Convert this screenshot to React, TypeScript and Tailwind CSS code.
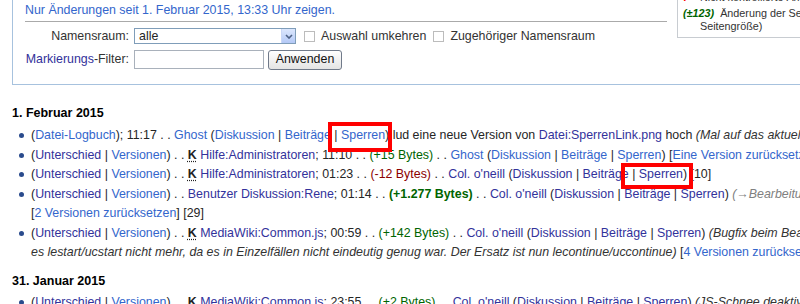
import React from "react";

function A({ v, children }: { v?: boolean; children: React.ReactNode }) {
  return <span className={v ? "text-[#32329b]" : "text-[#3366cc]"}>{children}</span>;
}

function K() {
  return <span className="font-bold text-[#222] underline decoration-dotted underline-offset-2">K</span>;
}

function Pos({ children }: { children: React.ReactNode }) {
  return <span className="text-[#006400]">{children}</span>;
}

function Neg({ children }: { children: React.ReactNode }) {
  return <span className="text-[#8b0000]">{children}</span>;
}

function C({ children }: { children: React.ReactNode }) {
  return <span className="italic text-[#333]">{children}</span>;
}

function Row({ lines }: { lines: React.ReactNode[] }) {
  return (
    <li className="flex">
      <div className="w-[19px] h-[19.5px] shrink-0 flex items-center pl-[7px]">
        <span className="block w-[5px] h-[5px] rounded-full bg-[#2a4b8d]" />
      </div>
      <div>
        {lines.map((l, i) => (
          <div key={i} className="whitespace-nowrap h-[19.5px] leading-[19.5px]">
            {l}
          </div>
        ))}
      </div>
    </li>
  );
}

function Checkbox() {
  return <span className="block w-[11px] h-[11px] border border-[#bcbcbc] bg-white shrink-0" />;
}

export default function App() {
  return (
    <div className="relative w-[800px] h-[304px] overflow-hidden bg-white font-['Liberation_Sans',Arial,sans-serif] text-[12.4px] text-[#252525]">
      {/* Options fieldset */}
      <div className="ml-[12px] w-[900px] border-l border-b border-[#a7c2de] h-[85px] flex">
        <div className="w-[654px] shrink-0 pl-[12px] mr-[10px]">
          <div className="h-[20px] leading-[20px] whitespace-nowrap">
            <A>Nur Änderungen seit 1. Februar 2015, 13:33 Uhr zeigen.</A>
          </div>
          <div className="mt-[1px] border-t border-[#aaaaaa]" />
          <div className="mt-[6px] h-[16px] flex items-center whitespace-nowrap">
            <div className="w-[104px] text-right text-[#333] shrink-0">Namensraum:</div>
            <div className="ml-[5px] w-[162px] h-[16px] border border-[#7f9db9] flex items-stretch bg-white">
              <div className="flex-1 pl-[4px] leading-[14px]">alle</div>
              <div className="w-[14px] bg-linear-to-b from-[#dce7fd] to-[#b4c9f6] flex items-center justify-center border-l border-[#c9d7f7]">
                <svg width="8" height="5" viewBox="0 0 8 5">
                  <path d="M1 1 L4 4 L7 1" fill="none" stroke="#4d6185" strokeWidth="1.6" />
                </svg>
              </div>
            </div>
            <div className="ml-[8px]"><Checkbox /></div>
            <span className="ml-[6px] text-[#333]">Auswahl umkehren</span>
            <div className="ml-[7px]"><Checkbox /></div>
            <span className="ml-[6px] text-[#333]">Zugehöriger Namensraum</span>
          </div>
          <div className="mt-[6px] h-[19px] flex items-center whitespace-nowrap">
            <div className="w-[104px] text-right text-[#333] shrink-0">
              <A v>Markierungs</A>-Filter:
            </div>
            <div className="ml-[5px] w-[130px] h-[19px] border border-[#a9b1bb] bg-white" />
            <div className="ml-[4px] w-[74px] h-[20px] rounded-[3px] border border-[#707a8a] bg-linear-to-b from-white to-[#e4e4e4] flex items-center justify-center text-[#111]">
              Anwenden
            </div>
          </div>
        </div>
        {/* legend */}
        <div className="w-[200px] shrink-0 self-start -mt-[13px] border border-[#c8ccd1] pl-[5px] pt-[3px] pb-[4px] text-[10.8px] leading-[13px] text-[#333] whitespace-nowrap">
          <div className="flex h-[13px]">
            <span className="w-[17px] text-[#ff0000] font-bold">!</span>
            <span>Nicht kontrollierte Änderung</span>
          </div>
          <div className="flex h-[13px] mt-[3px]">
            <span className="text-[#006400] font-bold italic">(±123)</span>
            <span className="ml-[6px]">Änderung der Seitengröße in Bytes</span>
          </div>
          <div className="h-[13px] pl-[17px]">Seitengröße)</div>
        </div>
      </div>

      {/* Changes list */}
      <div className="pl-[12px]">
        <div className="mt-[18px] h-[20px] leading-[20px] font-bold text-[12.5px] text-black">1. Februar 2015</div>
        <ul className="mt-[3px]">
          <Row
            lines={[
              <>(<A>Datei-Logbuch</A>); 11:17 . . <A>Ghost</A> (<A>Diskussion</A> | <A>Beiträge</A> | <A>Sperren</A>) lud eine neue Version von <A v>Datei:SperrenLink.png</A> hoch <C>(Mal auf das aktuelle Format gebracht)</C></>,
            ]}
          />
          <Row
            lines={[
              <>(<A v>Unterschied</A> | <A>Versionen</A>) . . <K /> <A v>Hilfe:Administratoren</A>; 11:10 . . <Pos>(+15 Bytes)</Pos> . . <A>Ghost</A> (<A>Diskussion</A> | <A>Beiträge</A> | <A>Sperren</A>) [<A>Eine Version zurücksetzen</A>]</>,
            ]}
          />
          <Row
            lines={[
              <>(<A v>Unterschied</A> | <A>Versionen</A>) . . <K /> <A v>Hilfe:Administratoren</A>; 01:23 . . <Neg>(-12 Bytes)</Neg> . . <A v>Col. o'neill</A> (<A v>Diskussion</A> | <A v>Beiträge</A> | <A v>Sperren</A>) [10]</>,
            ]}
          />
          <Row
            lines={[
              <>(<A v>Unterschied</A> | <A>Versionen</A>) . . <A v>Benutzer Diskussion:Rene</A>; 01:14 . . <span className="font-bold text-[#006400]">(+1.277 Bytes)</span> . . <A v>Col. o'neill</A> (<A v>Diskussion</A> | <A v>Beiträge</A> | <A v>Sperren</A>) <span className="italic text-[#808080]">(→Bearbeitung)</span></>,
              <>[<A>2 Versionen zurücksetzen</A>] [29]</>,
            ]}
          />
          <Row
            lines={[
              <>(<A v>Unterschied</A> | <A>Versionen</A>) . . <K /> <A v>MediaWiki:Common.js</A>; 00:59 . . <Pos>(+142 Bytes)</Pos> . . <A v>Col. o'neill</A> (<A v>Diskussion</A> | <A v>Beiträge</A> | <A v>Sperren</A>) <C>(Bugfix beim Bearbeiten: verwendet</C></>,
              <><C>es lestart/ucstart nicht mehr, da es in Einzelfällen nicht eindeutig genug war. Der Ersatz ist nun lecontinue/uccontinue)</C> [<A>4 Versionen zurücksetzen</A>]</>,
            ]}
          />
        </ul>
        <div className="mt-[8px] h-[20px] leading-[20px] font-bold text-[12.5px] text-black">31. Januar 2015</div>
        <ul className="mt-[2px]">
          <Row
            lines={[
              <>(<A v>Unterschied</A> | <A>Versionen</A>) . . <K /> <A v>MediaWiki:Common.js</A>; 23:55 . . <Pos>(+2 Bytes)</Pos> . . <A v>Col. o'neill</A> (<A v>Diskussion</A> | <A v>Beiträge</A> | <A v>Sperren</A>) <C>(JS-Schnee deaktiviert)</C></>,
            ]}
          />
        </ul>
      </div>

      {/* red annotation boxes */}
      <div className="absolute left-[328px] top-[122px] w-[64px] h-[30px] border-[4px] border-[#ff0000]" />
      <div className="absolute left-[621px] top-[163px] w-[72px] h-[26px] border-[4px] border-[#ff0000]" />
    </div>
  );
}
